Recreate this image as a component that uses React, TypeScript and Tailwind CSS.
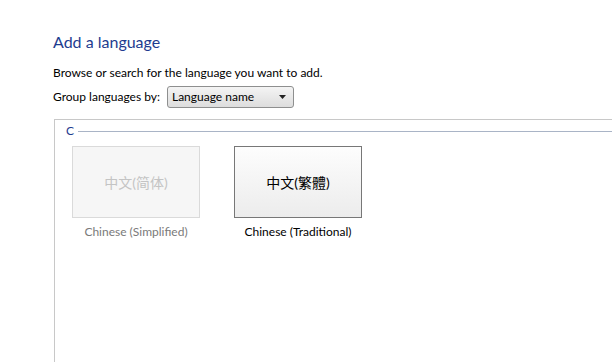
export default function App() {
  return (
    <div className="h-[362px] w-[612px] overflow-hidden bg-white pl-[53px] pt-[30px] text-[12px] text-black font-['Lato','Noto_Sans_CJK_TC',sans-serif]">
      <h1 className="text-[16px] leading-[24px] text-[#1e3c8f]">Add a language</h1>

      <p className="mt-[11px] leading-[16px]">Browse or search for the language you want to add.</p>

      <div className="mt-[5px] flex items-center gap-[7px]">
        <span>Group languages by:</span>
        <div className="flex h-[22px] w-[127px] items-center justify-between rounded-[3px] border border-[#8e8f8f] bg-gradient-to-b from-[#f4f4f4] to-[#dddddd] pl-[4px] pr-[7px]">
          <span>Language name</span>
          <svg width="7" height="4" viewBox="0 0 7 4">
            <path d="M0 0h7L3.5 4z" fill="#222" />
          </svg>
        </div>
      </div>

      {/* Language group panel */}
      <div className="ml-px mt-[11px] h-[300px] border-l border-t border-[#c8c8c8] pl-[11px] pt-[3px]">
        <div className="flex items-center gap-[4px] text-[#1e3c8f]">
          <span className="leading-[16px]">C</span>
          <div className="h-px flex-1 bg-[#a9b4c6]" />
        </div>

        <div className="mt-[7px] flex gap-[34px] pl-[6px]">
          <div className="flex flex-col items-center">
            <div className="flex h-[72px] w-[128px] items-center justify-center border border-[#dadada] bg-[#f6f6f6] text-[14px] text-[#c4c4c4]">
              中文(简体)
            </div>
            <span className="mt-[6px] leading-[16px] text-[#7a7a7a]">Chinese (Simplified)</span>
          </div>
          <div className="flex flex-col items-center">
            <div className="flex h-[72px] w-[128px] items-center justify-center border border-[#777] bg-gradient-to-b from-[#fdfdfd] to-[#ececec] text-[14px]">
              中文(繁體)
            </div>
            <span className="mt-[6px] leading-[16px]">Chinese (Traditional)</span>
          </div>
        </div>
      </div>
    </div>
  );
}
